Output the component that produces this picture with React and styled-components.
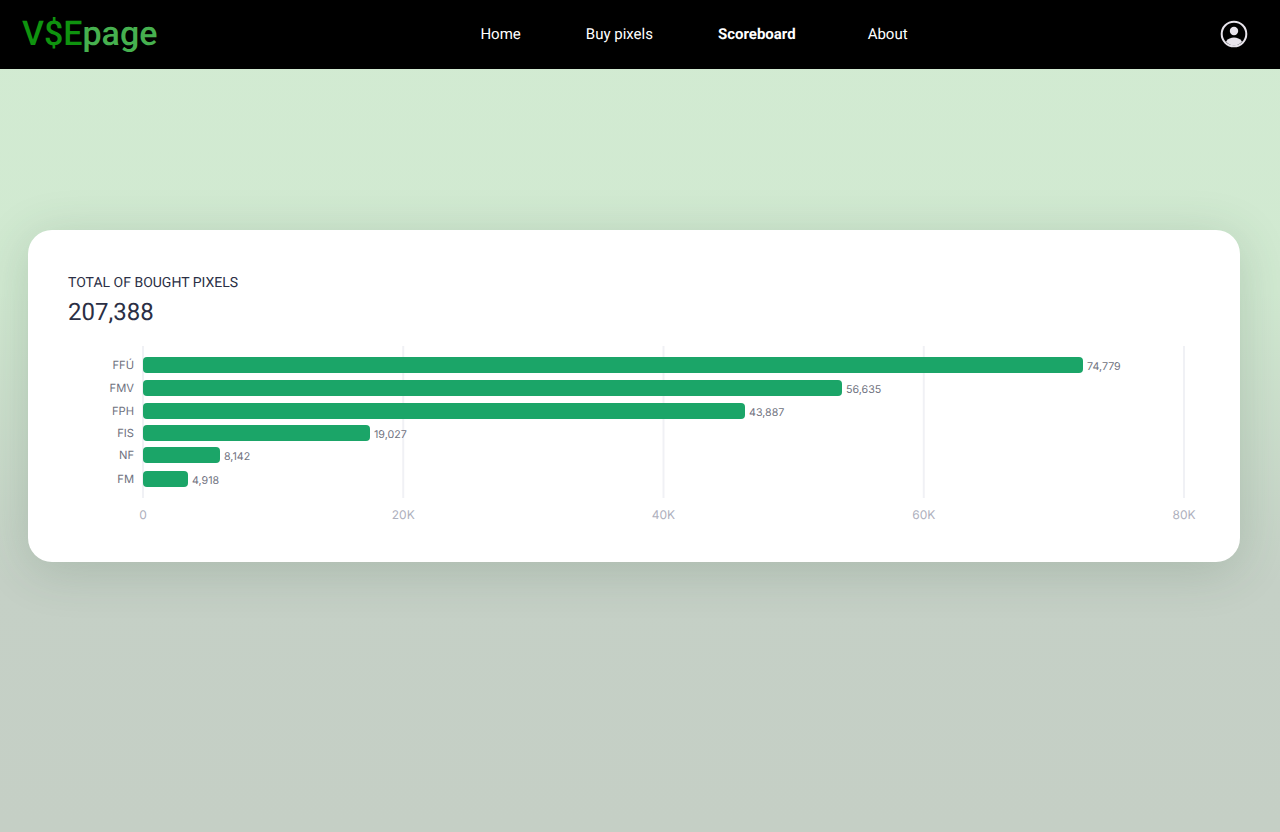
import styled, { createGlobalStyle } from "styled-components";

const BARS = [
  { label: "FFÚ", value: "74,779", y: 357, width: 940 },
  { label: "FMV", value: "56,635", y: 380, width: 699 },
  { label: "FPH", value: "43,887", y: 403, width: 602 },
  { label: "FIS", value: "19,027", y: 425, width: 227 },
  { label: "NF", value: "8,142", y: 447, width: 77 },
  { label: "FM", value: "4,918", y: 471, width: 45 },
];

const TICKS = [
  { label: "0", x: 143 },
  { label: "20K", x: 403.25 },
  { label: "40K", x: 663.5 },
  { label: "60K", x: 923.75 },
  { label: "80K", x: 1184 },
];

function User() {
  return (
    <svg width="28" height="28" viewBox="0 0 28 28" fill="none">
      <circle cx="14" cy="14" r="12.3" stroke="#e8e4ec" strokeWidth="2" />
      <circle cx="14" cy="11" r="4.200" fill="#e8e4ec" />
      <path d="M6 21.500C8 18.500 11 17.500 14 17.500s6 1 8 4C20 24 17 25.500 14 25.500s-6-1.500-8-4z" fill="#e8e4ec" />
    </svg>
  );
}

function Chart() {
  return (
    <svg width="1212" height="190" viewBox="28 342 1212 190">
      {TICKS.map((t) => (
        <g key={t.label}>
          <line x1={t.x} x2={t.x} y1={346} y2={498} stroke="#f0f1f5" strokeWidth="2" />
          <text x={t.x} y={518.5} textAnchor="middle" fontFamily="Inter, sans-serif" fontSize="12" fill="#aeb0bd">{t.label}</text>
        </g>
      ))}
      {BARS.map((b) => (
        <g key={b.label}>
          <text x={134} y={b.y + 12} textAnchor="end" fontFamily="Inter, sans-serif" fontSize="11.200" fill="#6f7280">{b.label}</text>
          <rect x={143} y={b.y} width={b.width} height={16} rx={4} fill="#1ba568" />
          <text x={143 + b.width + 4} y={b.y + 12.5} fontFamily="Inter, sans-serif" fontSize="10.700" fill="#6f7280">{b.value}</text>
        </g>
      ))}
    </svg>
  );
}

export default function App() {
  return (
    <>
      <Global />
      <Page>
        <Header>
          <Logo>
            <LogoDark>V$E</LogoDark>
            <LogoLight>page</LogoLight>
          </Logo>
          <Nav>
            <NavItem>Home</NavItem>
            <NavItem>Buy pixels</NavItem>
            <NavItem $active>Scoreboard</NavItem>
            <NavItem $spaced>About</NavItem>
          </Nav>
          <UserSlot>
            <User />
          </UserSlot>
        </Header>
        <Main>
          <Card>
            <Title>TOTAL OF BOUGHT PIXELS</Title>
            <Total>207,388</Total>
            <ChartWrap>
              <Chart />
            </ChartWrap>
          </Card>
        </Main>
      </Page>
    </>
  );
}

const Global = createGlobalStyle`
  html, body {
    margin: 0;
    padding: 0;
  }
  body {
    font-family: Roboto, "Liberation Sans", sans-serif;
    text-rendering: geometricPrecision;
  }
`;

const Page = styled.div`
  width: 1280px;
  height: 832px;
  overflow: hidden;
  display: flex;
  flex-direction: column;
  background: linear-gradient(180deg, #d2ebd2 0%, #d1e9d1 35%, #c5d0c6 70%, #c5cfc5 100%);
`;

const Header = styled.header`
  height: 69px;
  flex: none;
  background: #000;
  display: flex;
  align-items: center;
  padding: 0 32px 0 22px;
`;

const Logo = styled.div`
  font-size: 34px;
  font-weight: 500;
  line-height: 1;
  margin-top: -2px;
`;

const LogoDark = styled.span`
  color: #0f930f;
`;

const LogoLight = styled.span`
  color: #46b04f;
`;

const Nav = styled.nav`
  display: flex;
  margin-left: 323px;
  gap: 65px;
`;

const NavItem = styled.span`
  color: #fff;
  font-size: 15px;
  font-weight: ${(p) => (p.$active ? 700 : 400)};
  margin-top: -1px;
  margin-left: ${(p) => (p.$spaced ? "7px" : "0")};
`;

const UserSlot = styled.div`
  margin-left: auto;
  display: flex;
  margin-top: -2px;
`;

const Main = styled.main`
  padding: 161px 40px 0 28px;
`;

const Card = styled.section`
  background: #fff;
  border-radius: 24px;
  height: 332px;
  box-sizing: border-box;
  padding: 45px 0 0 40px;
  box-shadow: 0 8px 50px rgba(50, 80, 60, 0.2);
`;

const Title = styled.div`
  font-size: 14px;
  line-height: 16px;
  color: #2b2f45;
`;

const Total = styled.div`
  font-size: 24px;
  line-height: 28px;
  color: #2b2f45;
  margin-top: 7px;
`;

const ChartWrap = styled.div`
  margin: 16px 0 0 -40px;
  display: flex;
`;
